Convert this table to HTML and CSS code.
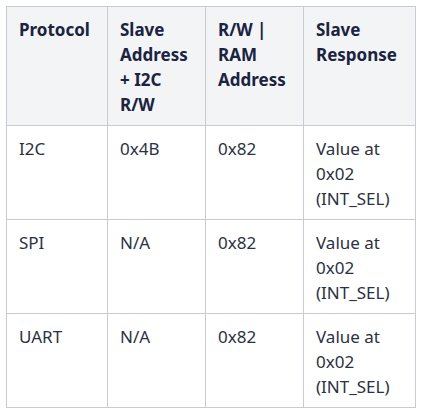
FILE: index.html
```html
<!DOCTYPE html>
<html>
<head>
<meta charset="utf-8">
<link rel="stylesheet" href="styles.css">
</head>
<body>
<div class="wrap">
<table class="grid">
<colgroup>
<col class="c1"><col class="c2"><col class="c3"><col class="c4">
</colgroup>
<thead>
<tr><th>Protocol</th><th>Slave Address + I2C R/W</th><th>R/W | RAM Address</th><th>Slave Response</th></tr>
</thead>
<tbody>
<tr><td>I2C</td><td>0x4B</td><td>0x82</td><td>Value at 0x02 (INT_SEL)</td></tr>
<tr><td>SPI</td><td>N/A</td><td>0x82</td><td>Value at 0x02 (INT_SEL)</td></tr>
<tr><td>UART</td><td>N/A</td><td>0x82</td><td>Value at 0x02 (INT_SEL)</td></tr>
</tbody>
</table>
</div>
</body>
</html>
```
FILE: styles.css
```css
html, body { margin: 0; padding: 0; background: #fff; }
.wrap { padding: 6px; }
.grid {
  border-collapse: collapse;
  table-layout: fixed;
  width: 409px;
  font-family: "Noto Sans", "Open Sans", sans-serif;
  font-size: 17px;
  line-height: 25px;
  color: #2b3142;
}
.c1 { width: 101px; }
.c2 { width: 98px; }
.c3 { width: 98px; }
.c4 { width: 112px; }
.grid th, .grid td {
  border: 1px solid #c8ccd2;
  padding: 10px 12px 8px;
  text-align: left;
  vertical-align: top;
}
.grid th {
  background: #f3f4f6;
  color: #1a2340;
  font-weight: 700;
}
```
